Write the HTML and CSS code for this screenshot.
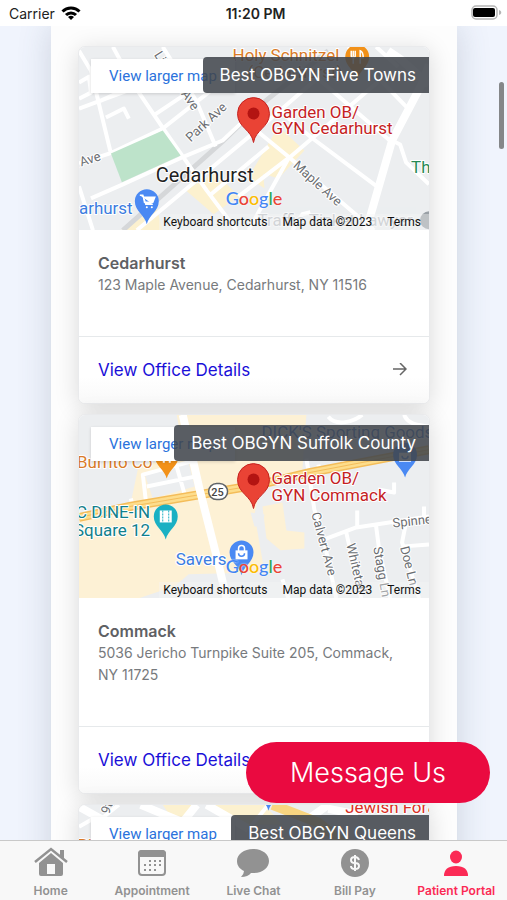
FILE: index.html
```html
<!DOCTYPE html>
<html lang="en">

<head>
    <meta charset="UTF-8">
    <meta name="viewport" content="width=device-width, initial-scale=1.0">
    <title>Garden OB/GYN</title>
    <link rel="stylesheet" href="styles.css">
</head>

<body>
    <!-- Shared map markers, origin at the tip -->
    <svg class="symbols" aria-hidden="true">
        <defs>
            <g id="pin-main">
                <path d="M0 0C-2 -13 -16 -15 -16 -29A16 16 0 0 1 16 -29C16 -15 2 -13 0 0Z" fill="#ea4335" stroke="#c5221f" stroke-width="1" />
                <circle cy="-29" r="6" fill="#b31412" />
            </g>
            <path id="pin-small" d="M0 0C-2 -9 -12 -13 -12 -23A12 12 0 0 1 12 -23C12 -13 2 -9 0 0Z" />
        </defs>
    </svg>

    <header class="status-bar">
        <div class="carrier">
            <span>Carrier</span>
            <svg width="20" height="14" viewBox="0 0 20 14" fill="none" stroke="#000" stroke-width="3">
                <path d="M1.500 5.500a12 12 0 0 1 17 0M5 9a7 7 0 0 1 10 0" />
                <path d="M10 14l-3-3a4.500 4.500 0 0 1 6 0z" fill="#000" stroke="none" />
            </svg>
        </div>
        <strong class="clock">11:20 PM</strong>
        <svg class="battery" width="32" height="16" viewBox="0 0 32 16">
            <rect x="2" y="1" width="25" height="13" rx="4" fill="#fff" stroke="#b5b5b5" stroke-width="1.500" />
            <rect x="3" y="3" width="22" height="9" rx="2" fill="#000" />
            <path d="M29 5c3 1 3 4 0 5z" fill="#b5b5b5" />
        </svg>
    </header>

    <main class="page">
        <section class="locations">

            <article class="card">
                <div class="map">
                    <svg class="map-art" viewBox="0 0 351 184" preserveAspectRatio="xMidYMid slice">
                        <rect width="351" height="184" fill="#eceef0" />
                        <path class="land-yellow" d="M107 144L137 126L160 150L135 168ZM174 124L200 80L226 104L200 132ZM42 184L78 162L84 184ZM168 130L184 118L186 142Z" />
                        <path class="rail" d="M44 184L144 95L180 60L250 4" />
                        <path class="road" d="M0 4L12 24L32 107M0 140L14 184M34 0L54 37L88 87L128 144L158 184M84 0L118 55L137 100M0 117L31 107L84 82L150 30M12 152L44 138L101 112L144 94L182 58M0 62L54 42M0 36L10 30L12 46L0 52M22 54L44 44L50 38M27 71L45 62L50 72M58 184L137 118L190 74L250 22M170 184L210 112L250 78L300 35M130 150L190 100M76 68L106 48M178 84L211 111L296 184M196 60L233 91L300 141M240 32L314 96M270 0L330 62" />
                        <path class="road wide" d="M288 184L314 94L344 37L351 18M310 4L322 12L351 38" />
                        <path class="road" d="M160 150L211 111M314 94L322 98L328 116L351 138M214 184L224 168L232 166M298 0L320 20" />
                        <path d="M32 107L84 84L102 109L43 136Z" fill="#bde3ca" />
                        <g class="street">
                            <text transform="translate(75 8) rotate(58)">Linden</text>
                            <text transform="translate(102 47) rotate(56)">Ave</text>
                            <text transform="translate(112 96) rotate(-43)">Park Ave</text>
                            <text transform="translate(-7 123) rotate(-18)">k Ave</text>
                            <text transform="translate(214 120) rotate(42)">Maple Ave</text>
                        </g>
                        <g class="place">
                            <text x="154" y="14" fill="#d97b28">Holy Schnitzel</text>
                            <text x="169" y="31" fill="#d97b28">(Cedarhurst)</text>
                            <text x="333" y="127" fill="#278a55">The</text>
                            <text x="0" y="168" fill="#3b7ce0">arhurst</text>
                            <text x="179" y="180" fill="#9aa0a6" opacity="0.6">Traffic Ticket Lawyer</text>
                            <text x="193" y="71" fill="#c5221f">Garden OB/</text>
                            <text x="193" y="88" fill="#c5221f">GYN Cedarhurst</text>
                        </g>
                        <text class="town" x="77" y="136">Cedarhurst</text>
                        <circle cx="351" cy="174" r="9" fill="#9aa0a6" />
                        <use href="#pin-small" x="279" y="33" fill="#f29118" />
                        <path d="M273 4v5q0 2 2 2v6M275 4v6M277 4v5q0 2-2 2M282 17V4q3 1 3 7h-3" stroke="#fff" stroke-width="1.500" fill="none" />
                        <use href="#pin-small" x="68" y="178" fill="#4a89f3" />
                        <path d="M61 149h3l3 9h7M64 151h12l-2 5h-9" stroke="#fff" stroke-width="1.500" fill="#fff" />
                        <circle cx="68" cy="161" r="1" fill="#fff" />
                        <circle cx="73" cy="161" r="1" fill="#fff" />
                        <use href="#pin-main" x="175" y="96" />
                    </svg>
                    <a class="map-link" href="#">View larger map</a>
                    <span class="badge">Best OBGYN Five Towns</span>
                    <div class="map-footer">
                        <span class="google"><i>G</i><i>o</i><i>o</i><i>g</i><i>l</i><i>e</i></span>
                        <div class="map-terms">
                            <span>Keyboard shortcuts</span>
                            <span>Map data ©2023</span>
                            <span>Terms</span>
                        </div>
                    </div>
                </div>
                <div class="card-body">
                    <h2>Cedarhurst</h2>
                    <p>123 Maple Avenue, Cedarhurst, NY 11516</p>
                </div>
                <a class="card-link" href="#">
                    <span>View Office Details</span>
                    <svg width="14" height="14" viewBox="0 0 14 14" fill="none" stroke="#666" stroke-width="1.500">
                        <path d="M0 6h13M7 0l6 6l-6 6" />
                    </svg>
                </a>
            </article>

            <article class="card">
                <div class="map">
                    <svg class="map-art" viewBox="0 0 351 184" preserveAspectRatio="xMidYMid slice">
                        <rect width="351" height="184" fill="#eceef0" />
                        <path d="M52 88L60 50L106 44L98 0H228L224 56L182 72L176 100L186 158L110 160L96 172L60 184H0V100Z" fill="#fdf1d5" />
                        <path d="M184 92L204 88L208 116L226 118V134L202 136L188 124Z" fill="#fdf1d5" />
                        <path d="M66 60L110 48L116 72L74 84Z" fill="#eceef0" />
                        <path d="M172 98L186 100L184 112L176 112Z" fill="#eceef0" />
                        <path class="road" d="M67 86L64 60L112 47M68 72L116 62M98 52L106 80M52 84L56 100M228 44L232 68L236 95L246 128L258 184M240 50L243 62M266 46L268 56M246 125L278 113L351 102M279 96V112M268 118L283 184M298 112L301 135L312 184M328 108L324 128L341 184M326 132L351 130M300 75L316 78V68M346 92V103M204 165L210 184" />
                        <path d="M250 2C258 12 276 7 284 0M326 0C330 10 340 10 351 12" class="road" />
                        <path d="M0 103L51 92L181 70L231 58L351 35" stroke="#f4bd5a" stroke-width="9" fill="none" />
                        <path d="M0 103L51 92L181 70L231 58L351 35" stroke="#fddd8c" stroke-width="6" fill="none" />
                        <path d="M0 103L51 92L181 70L231 58L351 35" stroke="#f4bd5a" stroke-width="1" fill="none" />
                        <path class="road wide" d="M104 0L121 75L138 142L148 184" />
                        <g class="street">
                            <text transform="translate(233 99) rotate(75)">Calvert Ave</text>
                            <text transform="translate(268 130) rotate(77)">Whitetail</text>
                            <text transform="translate(295 133) rotate(80)">Stagg Ln</text>
                            <text transform="translate(322 133) rotate(76)">Doe Ln</text>
                            <text transform="translate(315 113) rotate(-6)">Spinner</text>
                        </g>
                        <g class="place">
                            <text x="183" y="23" fill="#3b6fc9">DICK'S Sporting Goods</text>
                            <text x="-2" y="53" fill="#d97b28">Burrito Co</text>
                            <text x="-3" y="104" fill="#11808c">C DINE-IN</text>
                            <text x="-5" y="122" fill="#11808c">Square 12</text>
                            <text x="97" y="151" fill="#3b7ce0">Savers</text>
                            <text x="193" y="69" fill="#c5221f">Garden OB/</text>
                            <text x="193" y="86" fill="#c5221f">GYN Commack</text>
                        </g>
                        <rect x="130" y="69" width="19" height="16" rx="8" fill="#fff" stroke="#5f6368" stroke-width="1.500" />
                        <text class="shield" x="139" y="81">25</text>
                        <use href="#pin-small" x="88" y="64" fill="#f29118" />
                        <path d="M84 43h2v5h-2zM90 43h2v5h-2z" fill="#fff" />
                        <use href="#pin-small" x="87" y="125" fill="#1ab0c3" />
                        <path d="M81 96h12v12h-12z" fill="#fff" />
                        <path d="M84 96v12M90 96v12" stroke="#1ab0c3" stroke-width="1" stroke-dasharray="2 1" />
                        <use href="#pin-small" x="163" y="161" fill="#4a89f3" />
                        <path d="M157 136h12v9h-12z" fill="#fff" />
                        <path d="M160 137v-3a3 3 0 0 1 6 0v3" stroke="#fff" stroke-width="1.500" fill="none" />
                        <path d="M160 139a3 3 0 0 0 6 0" stroke="#4a89f3" stroke-width="1.500" fill="none" />
                        <use href="#pin-small" x="327" y="63" fill="#4a89f3" />
                        <path d="M321 38h12v9h-12z" fill="#fff" />
                        <path d="M324 41a3 3 0 0 0 6 0" stroke="#4a89f3" stroke-width="1.500" fill="none" />
                        <use href="#pin-main" x="175" y="94" />
                    </svg>
                    <a class="map-link" href="#">View larger map</a>
                    <span class="badge">Best OBGYN Suffolk County</span>
                    <div class="map-footer">
                        <span class="google"><i>G</i><i>o</i><i>o</i><i>g</i><i>l</i><i>e</i></span>
                        <div class="map-terms">
                            <span>Keyboard shortcuts</span>
                            <span>Map data ©2023</span>
                            <span>Terms</span>
                        </div>
                    </div>
                </div>
                <div class="card-body">
                    <h2>Commack</h2>
                    <p>5036 Jericho Turnpike Suite 205, Commack, NY 11725</p>
                </div>
                <a class="card-link" href="#">
                    <span>View Office Details</span>
                    <svg width="14" height="14" viewBox="0 0 14 14" fill="none" stroke="#666" stroke-width="1.500">
                        <path d="M0 6h13M7 0l6 6l-6 6" />
                    </svg>
                </a>
            </article>

            <article class="card">
                <div class="map">
                    <svg class="map-art" viewBox="0 0 351 184" preserveAspectRatio="xMidYMid slice">
                        <rect width="351" height="184" fill="#eceef0" />
                        <path class="land-yellow" d="M84 0H114L108 12H92ZM134 0H186L204 20H150Z" />
                        <path class="road wide" d="M0 2L40 24M62 0L110 20M118 0L94 30M128 0L170 24M222 20L250 0M250 4L280 10" />
                        <path class="road" d="M0 22L14 14L18 40M190 0L172 22M40 0L20 16" />
                        <path d="M194 0L240 18L280 50" stroke="#f9d580" stroke-width="10" fill="none" />
                        <g class="street">
                            <text transform="translate(30 10) rotate(-70)">9th</text>
                        </g>
                        <g class="place">
                            <text x="267" y="8" fill="#d93025">Jewish Forum</text>
                            <text x="-2" y="46" fill="#d97b28">Pizza</text>
                        </g>
                        <use href="#pin-small" x="190" y="6" fill="#4a89f3" />
                    </svg>
                    <a class="map-link" href="#">View larger map</a>
                    <span class="badge">Best OBGYN Queens</span>
                </div>
            </article>

        </section>
        <span class="scroll-thumb"></span>
    </main>

    <button class="message-btn" type="button">Message Us</button>

    <nav class="tab-bar">
        <a class="tab" href="#">
            <svg width="36" height="32" viewBox="0 0 36 32">
                <path d="M2 16L18 3L34 16" fill="none" stroke="currentColor" stroke-width="2.500" />
                <path d="M27 4h4v9l-4-3z" fill="currentColor" />
                <path d="M18 7L30 17V28q0 2-2 2H8q-2 0-2-2V17ZM14 18v10h8V18Z" fill="currentColor" fill-rule="evenodd" />
            </svg>
            <span>Home</span>
        </a>
        <a class="tab" href="#">
            <svg width="36" height="32" viewBox="0 0 36 32">
                <rect x="5" y="5" width="26" height="24" rx="3" fill="none" stroke="currentColor" stroke-width="2" />
                <path d="M4 11V8q0-4 4-4h20q4 0 4 4v3z" fill="currentColor" />
                <path d="M15 15h12M10 19h17M10 24h12" stroke="currentColor" stroke-width="2" stroke-dasharray="2 3" />
            </svg>
            <span>Appointment</span>
        </a>
        <a class="tab" href="#">
            <svg width="36" height="32" viewBox="0 0 36 32">
                <path d="M18 3C9 3 2 8 2 15C2 20 5 23 9 25Q9 28 6 31Q13 31 16 27C27 28 34 22 34 15C34 8 27 3 18 3Z" fill="currentColor" />
            </svg>
            <span>Live Chat</span>
        </a>
        <a class="tab" href="#">
            <svg width="36" height="32" viewBox="0 0 36 32">
                <circle cx="18" cy="17" r="14" fill="currentColor" />
                <path d="M22 14q-1-3-4-3q-4 0-4 3t4 3t4 3q0 3-4 3q-4 0-4-3M18 9v16" fill="none" stroke="#f8f8f8" stroke-width="2" />
            </svg>
            <span>Bill Pay</span>
        </a>
        <a class="tab active" href="#">
            <svg width="36" height="32" viewBox="0 0 36 32">
                <ellipse cx="18" cy="11" rx="6" ry="6.500" fill="currentColor" />
                <path d="M6 30q0-10 12-10t12 10z" fill="currentColor" />
            </svg>
            <span>Patient Portal</span>
        </a>
    </nav>
</body>

</html>
```

FILE: styles.css
```css
* {
    box-sizing: border-box;
}

body {
    margin: 0;
    height: 100vh;
    display: flex;
    flex-direction: column;
    overflow: hidden;
    background: #fff;
    font-family: Inter, "Liberation Sans", sans-serif;
    color: #666;
}

a {
    text-decoration: none;
}

.symbols {
    position: absolute;
    width: 0;
    height: 0;
}

/* Status bar */
.status-bar {
    flex: none;
    display: grid;
    grid-template-columns: 1fr auto 1fr;
    align-items: center;
    height: 26px;
    padding: 0 5px 0 9px;
    color: #222;
    font-size: 14px;
}

.carrier {
    display: flex;
    align-items: center;
    gap: 6px;
}

.clock {
    font-weight: 600;
}

.battery {
    justify-self: end;
}

/* Scrolling page */
.page {
    position: relative;
    flex: 1;
    min-height: 0;
    overflow: hidden;
    background: #f0f4fd;
}

.locations {
    display: flex;
    flex-direction: column;
    gap: 10px;
    margin: 0 50px 0 51px;
    padding: 20px 27px;
    background: #fdfdfd;
    box-shadow: 0 0 32px rgba(60, 80, 100, 0.2);
}

.scroll-thumb {
    position: absolute;
    top: 56px;
    right: 3px;
    width: 5px;
    height: 67px;
    border-radius: 3px;
    background: #858789;
}

/* Office cards */
.card {
    overflow: hidden;
    border: 1px solid #e9eaec;
    border-radius: 7px;
    background: #fff;
    box-shadow: 0 4px 24px rgba(0, 0, 0, 0.14);
}

.card-body {
    padding: 22px 19px 40px;
    border-bottom: 1px solid #e6e9eb;
    line-height: 22px;
}

.card-body h2 {
    margin: 0;
    font-size: 16px;
    font-weight: 600;
    color: #5f6164;
}

.card-body p {
    margin: 0;
    font-size: 14px;
    color: #777a7d;
}

.card-link {
    display: flex;
    align-items: center;
    justify-content: space-between;
    height: 66px;
    padding: 0 22px 0 19px;
    background: linear-gradient(#fff 60%, #f9f9f9);
    color: #1a0fd8;
    font-size: 17px;
}

/* Maps */
.map {
    position: relative;
    height: 183px;
    overflow: hidden;
    font-family: Roboto, "Liberation Sans", sans-serif;
}

.map-art {
    display: block;
    width: 100%;
    height: 100%;
}

.land-yellow {
    fill: #fcf1cf;
}

.rail {
    fill: none;
    stroke: #d5d7d9;
    stroke-width: 5;
}

.road {
    fill: none;
    stroke: #fff;
    stroke-width: 4;
    stroke-linejoin: round;
}

.road.wide {
    stroke-width: 8;
}

.street text,
.place text,
.town {
    paint-order: stroke;
    stroke: #fff;
    stroke-width: 2px;
    stroke-linejoin: round;
}

.street {
    font-size: 13px;
    fill: #6b6e72;
}

.place {
    font-size: 17px;
}

.town {
    font-size: 20px;
    fill: #222;
}

.shield {
    font-size: 11px;
    font-weight: 500;
    text-anchor: middle;
    fill: #444;
}

.map-link {
    position: absolute;
    top: 12px;
    left: 12px;
    padding: 0 18px;
    background: #fff;
    box-shadow: 0 1px 3px rgba(0, 0, 0, 0.15);
    color: #2a72dc;
    font-size: 15px;
    line-height: 34px;
}

.badge {
    position: absolute;
    top: 10px;
    right: 0;
    padding: 0 13px 0 17px;
    border-radius: 4px 0 0 4px;
    background: rgba(64, 69, 76, 0.87);
    color: #fff;
    font-family: Inter, "Liberation Sans", sans-serif;
    font-size: 17px;
    line-height: 36px;
}

.map-footer {
    position: absolute;
    right: 0;
    bottom: 0;
    left: 0;
    display: flex;
    flex-direction: column;
    align-items: center;
    gap: 4px;
}

.google {
    font-family: Lato, sans-serif;
    font-size: 18px;
    line-height: 24px;
}

.google i {
    font-style: normal;
    font-weight: 500;
    color: #4285f4;
    text-shadow: 0 0 2px #fff;
}

.google i:nth-child(2),
.google i:nth-child(6) {
    color: #ea4335;
}

.google i:nth-child(3) {
    color: #fbbc05;
}

.google i:nth-child(5) {
    color: #34a853;
}

.map-terms {
    align-self: flex-end;
    display: flex;
    gap: 15px;
    padding: 0 8px 0 4px;
    background: rgba(245, 245, 245, 0.4);
    color: #111;
    font-size: 12px;
    line-height: 16px;
}

/* Floating chat button */
.message-btn {
    position: fixed;
    right: 17px;
    bottom: 97px;
    padding: 0 44px;
    border: 0;
    border-radius: 31px;
    background: #ea0a40;
    color: #fff;
    font-family: inherit;
    font-size: 27px;
    font-weight: 300;
    line-height: 61px;
}

/* Bottom tabs */
.tab-bar {
    flex: none;
    display: grid;
    grid-template-columns: repeat(5, 1fr);
    height: 60px;
    border-top: 1px solid #c9c9c9;
    background: #f8f8f8;
}

.tab {
    display: flex;
    flex-direction: column;
    align-items: center;
    gap: 4px;
    padding-top: 5px;
    color: #929292;
    font-size: 12px;
    font-weight: 600;
    line-height: 18px;
    white-space: nowrap;
}

.tab.active {
    color: #fb2a55;
}
```
